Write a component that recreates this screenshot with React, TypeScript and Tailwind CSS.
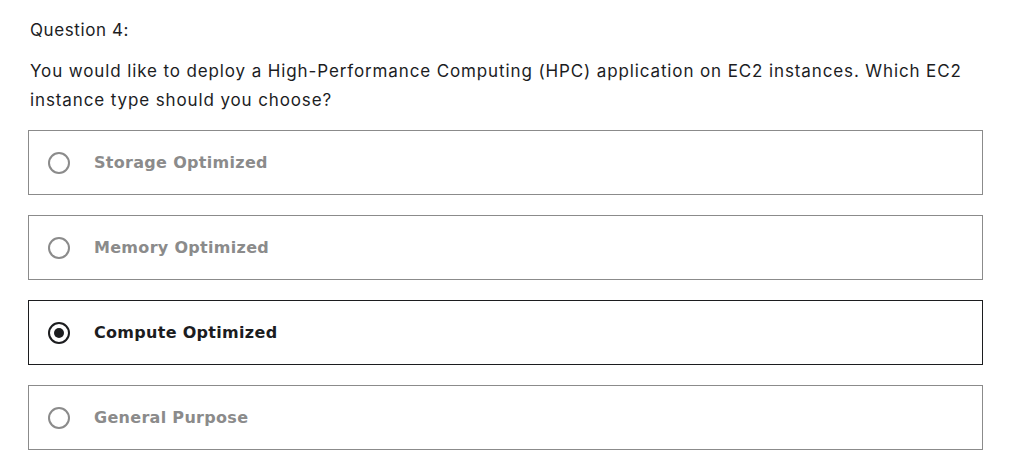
import React from 'react'

interface Option {
  id: string
  label: string
}

const options: Option[] = [
  { id: 'a', label: 'Storage Optimized' },
  { id: 'b', label: 'Memory Optimized' },
  { id: 'c', label: 'Compute Optimized' },
  { id: 'd', label: 'General Purpose' },
]

const selectedId = 'c'

const Radio = ({ checked }: { checked: boolean }) => (
  <span
    className={
      checked
        ? 'flex w-[22px] h-[22px] items-center justify-center rounded-full border-2 border-[#1c1d1f]'
        : 'flex w-[22px] h-[22px] items-center justify-center rounded-full border-2 border-[#8b8b8b]'
    }
  >
    {checked && <span className="block w-[10px] h-[10px] rounded-full bg-[#1c1d1f]" />}
  </span>
)

export default function App() {
  return (
    <div
      className="bg-white min-h-[468px] pl-[28px] pt-[18px] text-[#1c1d1f]"
      style={{ fontFamily: 'Inter, "Noto Sans", sans-serif' }}
    >
      <div className="w-[955px]">
        <div className="text-[17px] leading-[24px] tracking-[0.6px] pl-[2px]">Question 4:</div>

        <p className="mt-[15px] text-[17px] leading-[29px] tracking-[0.88px] pl-[2px]">
          You would like to deploy a High-Performance Computing (HPC) application on EC2 instances. Which EC2
          instance type should you choose?
        </p>

        {/* answers */}
        <div className="mt-[15px] flex flex-col gap-[20px]">
          {options.map((o) => {
            const checked = o.id === selectedId
            return (
              <div
                key={o.id}
                className={
                  checked
                    ? 'flex h-[65px] items-center border border-[#1c1d1f] pl-[19px]'
                    : 'flex h-[65px] items-center border border-[#8b8b8b] pl-[19px]'
                }
              >
                <Radio checked={checked} />
                <span
                  className={
                    checked
                      ? "ml-[24px] font-['DejaVu_Sans',sans-serif] text-[16px] tracking-[0.3px] font-bold text-[#1c1d1f]"
                      : "ml-[24px] font-['DejaVu_Sans',sans-serif] text-[16px] tracking-[0.3px] font-bold text-[#8b8b8b]"
                  }
                >
                  {o.label}
                </span>
              </div>
            )
          })}
        </div>
      </div>
    </div>
  )
}
